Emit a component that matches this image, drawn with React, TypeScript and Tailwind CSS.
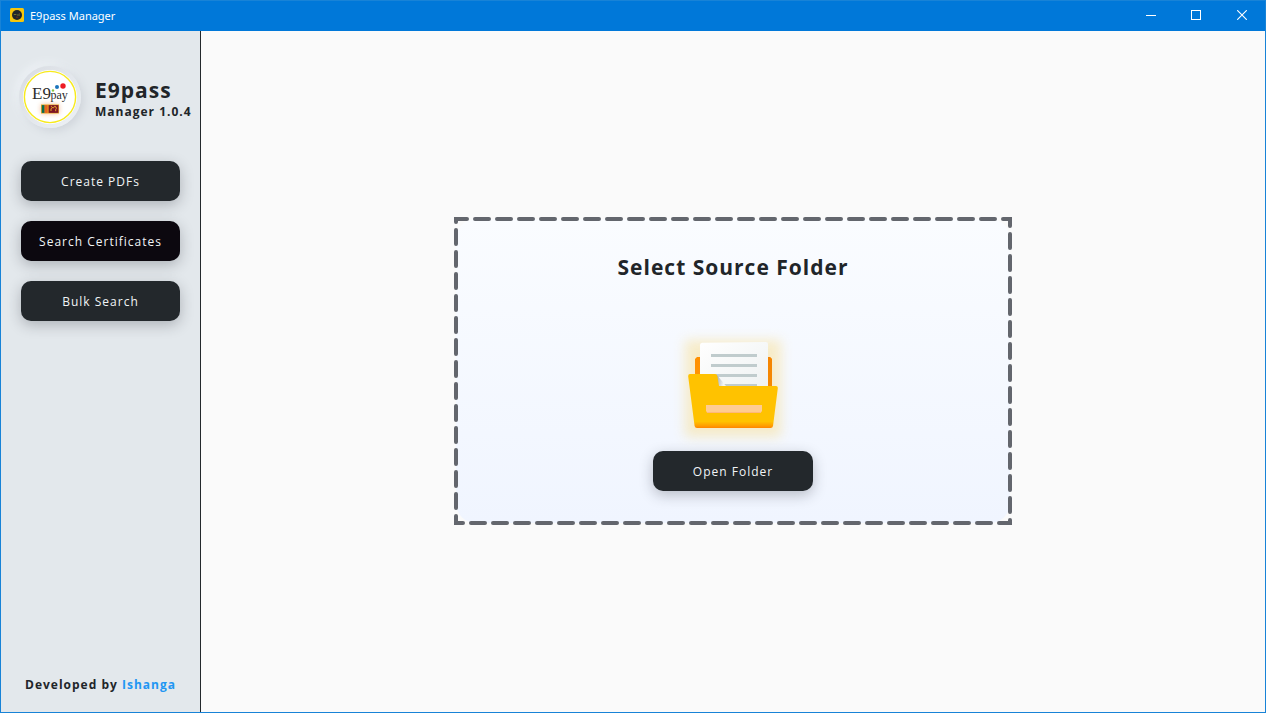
import type { ReactNode } from "react";

function AppIcon() {
  return (
    <svg className="size-[14px]" viewBox="0 0 14 14" aria-hidden="true">
      <rect width="14" height="14" rx="1.5" fill="#f5c60c" />
      <circle cx="7" cy="7" r="5" fill="#20262a" />
      <path d="M3.800 6.500h2.600M7 7h3" stroke="#7d7a30" strokeWidth="0.9" />
      <path d="M8.800 5.500h1" stroke="#6a3a34" strokeWidth="0.9" />
      <path d="M6 9.200h2.400" stroke="#6a2a22" strokeWidth="1" />
    </svg>
  );
}

function TitleBar() {
  return (
    <header className="flex h-[30px] shrink-0 items-center bg-[#0078d9] pb-0.5 pl-[9px] text-white">
      <AppIcon />
      <span className="ml-[6px] flex-1 pt-0.5 font-['Noto_Sans','Open_Sans',sans-serif] text-[11px] leading-4">
        E9pass Manager
      </span>
      <button type="button" aria-label="Minimize" className="flex h-full w-11 items-center justify-center">
        <svg className="size-[10px]" viewBox="0 0 10 10" shapeRendering="crispEdges">
          <path d="M0 5.5h10" stroke="currentColor" />
        </svg>
      </button>
      <button type="button" aria-label="Maximize" className="flex h-full w-[46px] items-center justify-center">
        <svg className="size-[10px]" viewBox="0 0 10 10" shapeRendering="crispEdges">
          <rect x="0.5" y="0.5" width="9" height="9" fill="none" stroke="currentColor" />
        </svg>
      </button>
      <button type="button" aria-label="Close" className="flex h-full w-[46px] items-center justify-center">
        <svg className="size-[10px]" viewBox="0 0 10 10">
          <path d="M0.2 0.2l9.6 9.6M9.8 0.2l-9.6 9.6" stroke="currentColor" strokeWidth="1.1" />
        </svg>
      </button>
    </header>
  );
}

function Logo() {
  return (
    <div className="flex size-[62px] shrink-0 items-center justify-center rounded-full bg-linear-to-br from-[#d8dce2] to-[#eef2f6] shadow-[3px_3px_8px_#cfd4da,-3px_-3px_8px_#eff3f7]">
      <svg className="size-[54px]" viewBox="0 0 54 54" role="img" aria-label="E9pay">
        <defs>
          <filter id="flagGlow" x="-50%" y="-80%" width="200%" height="260%">
            <feGaussianBlur stdDeviation="2.5" />
          </filter>
        </defs>
        <circle cx="27" cy="27" r="27" fill="#fff" />
        <circle cx="27" cy="27" r="25.6" fill="#fff" stroke="#f7ea1c" strokeWidth="1.4" />
        <text x="9" y="28.500" fontFamily="Liberation Serif, serif" fontSize="17" fill="#2d2d2d">E9</text>
        <text x="27.500" y="28.500" fontFamily="Liberation Serif, serif" fontSize="12" fill="#2d2d2d">pay</text>
        <circle cx="30" cy="20.5" r="1.2" fill="#8cc63f" />
        <circle cx="34" cy="17" r="2" fill="#1b75bc" />
        <circle cx="40" cy="16" r="2.7" fill="#ed1c24" />
        <rect x="18" y="34.500" width="18" height="9" fill="#e8772a" opacity="0.5" filter="url(#flagGlow)" />
        <rect x="18" y="34.500" width="18" height="9" fill="#e5a823" />
        <rect x="18.8" y="35.1" width="2.8" height="7.8" fill="#0b6b4f" />
        <rect x="21.6" y="35.1" width="3" height="7.8" fill="#e8621f" />
        <rect x="25.6" y="35.1" width="9.8" height="7.8" fill="#7d1324" />
        <path d="M28 41v-2l1-1.5 1.5.4 1-1.6 1.5.6.3 1.8-.6.8v1.7M28.4 36.900v-1" stroke="#e5a823" strokeWidth="1" fill="none" />
      </svg>
    </div>
  );
}

function DarkButton({ children, active = false }: { children: ReactNode; active?: boolean }) {
  const tone = active ? "bg-[#0c080f]" : "bg-[#23282c]";
  return (
    <button
      type="button"
      className={`h-10 w-full rounded-[10px] pt-0.5 text-[12px] leading-4 tracking-[1px] text-[#f1f4f6] shadow-[0_4px_14px_rgba(35,40,50,0.28)] ${tone}`}
    >
      {children}
    </button>
  );
}

function Sidebar() {
  return (
    <aside className="flex w-[200px] shrink-0 flex-col border-r border-[#23282c] bg-[#e3e8ec] px-5 pt-[35px] pb-[19px]">
      <div className="-mr-5 -ml-0.5 flex items-center gap-[14px]">
        <Logo />
        <div className="pt-0.5 font-bold whitespace-nowrap">
          <h1 className="text-[21px] leading-7 tracking-[1px]">E9pass</h1>
          <p className="text-[12px] leading-4 tracking-[1px]">Manager 1.0.4</p>
        </div>
      </div>
      <nav className="mt-[33px] flex flex-col gap-5">
        <DarkButton>Create PDFs</DarkButton>
        <DarkButton active>Search Certificates</DarkButton>
        <DarkButton>Bulk Search</DarkButton>
      </nav>
      <p className="mt-auto text-center text-[12px] leading-4 font-bold tracking-[1px] whitespace-nowrap">
        Developed by{" "}
        <a href="#ishanga" className="text-[#2196f3]">
          Ishanga
        </a>
      </p>
    </aside>
  );
}

function FolderIcon() {
  return (
    <svg className="h-[88px] w-[90px] overflow-visible" viewBox="0 0 90 88" aria-hidden="true">
      <defs>
        <filter id="folderGlow" x="-30%" y="-30%" width="160%" height="160%">
          <feGaussianBlur stdDeviation="6" />
        </filter>
        <linearGradient id="paper" x1="0" y1="0" x2="1" y2="1">
          <stop offset="0" stopColor="#ffffff" />
          <stop offset="1" stopColor="#edf1f1" />
        </linearGradient>
        <linearGradient id="back" x1="0" y1="0" x2="0" y2="1">
          <stop offset="0" stopColor="#ff8f00" />
          <stop offset="1" stopColor="#ff9d0a" />
        </linearGradient>
        <linearGradient id="front" x1="0" y1="0" x2="0" y2="1">
          <stop offset="0.88" stopColor="#ffc200" />
          <stop offset="0.96" stopColor="#ff9d00" />
          <stop offset="1" stopColor="#ff8400" />
        </linearGradient>
        <linearGradient id="fold" x1="0" y1="0.3" x2="0.8" y2="0.5">
          <stop offset="0" stopColor="#a9b3ba" />
          <stop offset="1" stopColor="#f3f5f6" />
        </linearGradient>
      </defs>
      <rect x="-3" y="-1" width="96" height="97" fill="#f8dc86" opacity="0.45" filter="url(#folderGlow)" />
      <path d="M9 16h73l2 2v40H7V18z" fill="url(#back)" />
      <path d="M80 16h2l2 2v30h-4z" fill="#ee7f04" opacity="0.6" />
      <path d="M14 1.7L78 1q2 0 2 2v50H12V4q0-2 2-2.3z" fill="url(#paper)" />
      <path d="M23 13h46v3H23zM23 23h46v3H23zM23 33h46v3H23zM23 43h46v3H23z" fill="#c0cccd" />
      <path d="M29 34l9 11h-9z" fill="url(#fold)" />
      <path
        d="M2 33h25q2 0 2.400 2.200L31 45h57q2 0 1.800 2.200L85 85q-.3 2-2.500 2H9q-2 0-2.400-2L.2 35.500Q0 33 2 33z"
        fill="url(#front)"
      />
      <path d="M18 64h56v6l-1.500 2h-53L18 70z" fill="#ffcc92" />
      <path d="M18.500 71h54.500l-.5 1h-53z" fill="#ffb87c" />
    </svg>
  );
}

function DropZone() {
  return (
    <section className="relative flex w-[558px] max-w-full flex-col items-center px-5 pt-[35px] pb-[34px]">
      <div className="absolute inset-[2px] rounded-[20px] bg-linear-to-b from-[#fafcff] to-[#f0f5ff]" />
      <svg className="absolute inset-0 size-full" aria-hidden="true">
        <rect
          x="2"
          y="2"
          className="h-[calc(100%-4px)] w-[calc(100%-4px)]"
          fill="none"
          stroke="#63666d"
          strokeWidth="4"
          strokeLinecap="round"
          strokeDasharray="14 8"
          strokeDashoffset="3"
        />
      </svg>
      <h2 className="relative text-[21px] leading-[30px] font-bold tracking-[1px]">Select Source Folder</h2>
      <div className="relative mt-[59px]">
        <FolderIcon />
      </div>
      <div className="relative mt-[22px] w-40">
        <DarkButton>Open Folder</DarkButton>
      </div>
    </section>
  );
}

export default function App() {
  return (
    <div className="flex min-h-screen flex-col border border-[#1883d7] bg-[#fafafa] font-['Open_Sans','Noto_Sans',sans-serif] text-[#212529]">
      <TitleBar />
      <div className="flex flex-1">
        <Sidebar />
        <main className="flex flex-1 items-center justify-center pb-px">
          <DropZone />
        </main>
      </div>
    </div>
  );
}
